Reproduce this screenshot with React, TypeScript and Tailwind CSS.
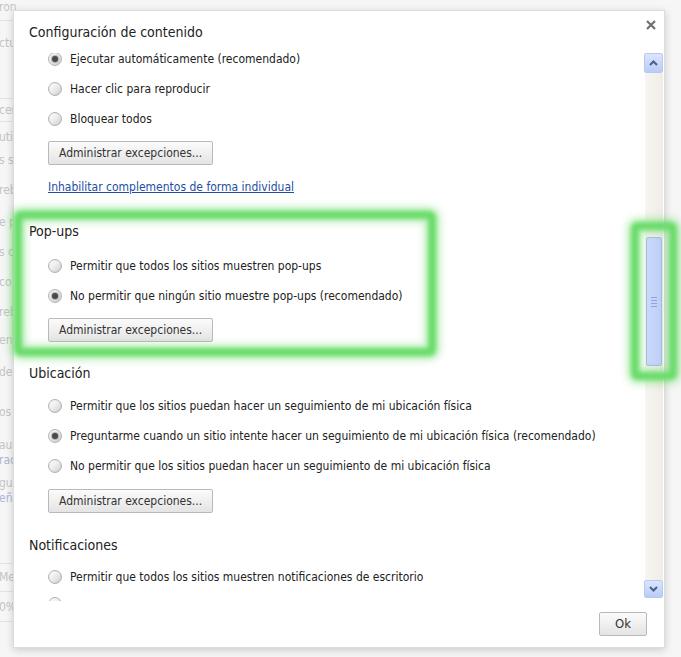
import React from 'react'

const font = { fontFamily: '"DejaVu Sans Condensed", Tahoma, "Liberation Sans", sans-serif' }

function Radio({ checked = false }: { checked?: boolean }) {
  return (
    <span className="flex items-center justify-center w-[14px] h-[14px] rounded-full border border-[#b4b4b4] bg-gradient-to-br from-white via-[#ececec] to-[#cfcfcf] shadow-[inset_0_0_1px_rgba(0,0,0,0.15)]">
      {checked && <span className="w-[6px] h-[6px] rounded-full bg-[#4a4a4a] shadow-[0_0_1px_1px_rgba(120,120,120,0.5)]" />}
    </span>
  )
}

function Option({ label, checked = false }: { label: string; checked?: boolean }) {
  return (
    <div className="flex items-center h-[30px] pl-[19px] gap-[8px] text-[12px] text-[#222]">
      <Radio checked={checked} />
      <span>{label}</span>
    </div>
  )
}

function Btn({ children, className = '' }: { children: React.ReactNode; className?: string }) {
  return (
    <div
      className={`flex items-center h-[24px] px-[10px] rounded-[2px] border border-[#b9b9b9] bg-gradient-to-b from-[#fbfbfb] to-[#e4e4e4] text-[12px] text-[#333] ${className}`}
    >
      {children}
    </div>
  )
}

function Heading({ children, className = '' }: { children: React.ReactNode; className?: string }) {
  return <div className={`h-[20px] flex items-center text-[14px] text-[#222] ${className}`}>{children}</div>
}

const bgLines: { y: number; t: string; blue?: boolean }[] = [
  { y: 0, t: 'ron' },
  { y: 36, t: 'ctu' },
  { y: 103, t: 'cer' },
  { y: 130, t: 'uti' },
  { y: 153, t: 's si' },
  { y: 183, t: 'reb' },
  { y: 215, t: 'e p' },
  { y: 245, t: 's c' },
  { y: 275, t: 'co' },
  { y: 305, t: 'reb' },
  { y: 333, t: 'en' },
  { y: 365, t: 'de' },
  { y: 405, t: 'os' },
  { y: 438, t: 'aut' },
  { y: 453, t: 'rac', blue: true },
  { y: 476, t: 'gu' },
  { y: 491, t: 'eñ', blue: true },
  { y: 570, t: 'Mec' },
  { y: 600, t: '0%' }
]

export default function App() {
  return (
    <div className="relative w-[681px] h-[657px] overflow-hidden bg-[#f6f6f6]" style={font}>
      {/* faded page behind the dialog */}
      <div className="absolute inset-0">
        <div className="absolute left-0 top-[20px] w-[40px] h-px bg-[#e2e2e2]" />
        <div className="absolute left-0 top-[98px] w-[40px] h-px bg-[#e2e2e2]" />
        <div className="absolute left-0 top-[121px] w-[40px] h-px bg-[#e2e2e2]" />
        <div className="absolute left-0 top-[563px] w-[40px] h-px bg-[#e2e2e2]" />
        <div className="absolute left-0 top-[591px] w-[40px] h-px bg-[#e2e2e2]" />
        <div className="absolute left-0 top-[621px] w-[40px] h-px bg-[#e2e2e2]" />
        {bgLines.map(l => (
          <div
            key={l.y}
            className={`absolute left-[-1px] text-[12px] leading-[14px] ${l.blue ? 'text-[#a9b6d8]' : 'text-[#c4c4c4]'}`}
            style={{ top: l.y }}
          >
            {l.t}
          </div>
        ))}
      </div>

      {/* dialog */}
      <div className="absolute left-[13px] top-[10px] w-[652px] h-[638px] bg-white border border-[#dcdcdc] shadow-[0_2px_8px_rgba(0,0,0,0.18)] flex flex-col">
        <div className="h-[42px] flex justify-between pl-[15px] pr-[8px] shrink-0">
          <div className="flex items-center text-[14px] text-[#222]">Configuración de contenido</div>
          <svg width="10" height="10" viewBox="0 0 10 10" className="mt-[9px]">
            <path d="M1 1 L9 9 M9 1 L1 9" stroke="#707070" strokeWidth="2.2" />
          </svg>
        </div>

        <div className="flex h-[548px] shrink-0">
          <div className="flex-1 overflow-hidden pl-[15px]">
            <div className="-mt-[9px]">
              <Option label="Ejecutar automáticamente (recomendado)" checked />
              <Option label="Hacer clic para reproducir" />
              <Option label="Bloquear todos" />
              <div className="pl-[19px] mt-[7px] flex">
                <Btn>Administrar excepciones...</Btn>
              </div>
              <div className="pl-[19px] mt-[14px] h-[16px] flex items-center text-[12px] text-[#1e4ea6] underline">
                Inhabilitar complementos de forma individual
              </div>

              <Heading className="mt-[26px]">Pop-ups</Heading>
              <div className="mt-[10px]">
                <Option label="Permitir que todos los sitios muestren pop-ups" />
                <Option label="No permitir que ningún sitio muestre pop-ups (recomendado)" checked />
              </div>
              <div className="pl-[19px] mt-[7px] flex">
                <Btn>Administrar excepciones...</Btn>
              </div>

              <Heading className="mt-[21px]">Ubicación</Heading>
              <div className="mt-[8px]">
                <Option label="Permitir que los sitios puedan hacer un seguimiento de mi ubicación física" />
                <Option label="Preguntarme cuando un sitio intente hacer un seguimiento de mi ubicación física (recomendado)" checked />
                <Option label="No permitir que los sitios puedan hacer un seguimiento de mi ubicación física" />
              </div>
              <div className="pl-[19px] mt-[8px] flex">
                <Btn>Administrar excepciones...</Btn>
              </div>

              <Heading className="mt-[22px]">Notificaciones</Heading>
              <div className="mt-[7px]">
                <Option label="Permitir que todos los sitios muestren notificaciones de escritorio" />
                <div className="pl-[19px] mt-[5px]">
                  <Radio />
                </div>
              </div>
            </div>
          </div>

          {/* scrollbar */}
          <div className="w-[19px] mr-px h-[545px] flex flex-col">
            <div className="h-[20px] flex items-center justify-center rounded-[2px] border border-[#b7c8f2] bg-gradient-to-b from-[#dbe5fd] to-[#b9cbf7]">
              <svg width="9" height="6" viewBox="0 0 9 6">
                <path d="M1 5 L4.5 1.5 L8 5" stroke="#4b5f86" strokeWidth="2" fill="none" />
              </svg>
            </div>
            <div className="flex-1 bg-gradient-to-r from-[#f7f6f1] to-[#efede6] border-l border-white flex flex-col">
              <div className="h-[164px]" />
              <div className="h-[129px] mx-px rounded-[2px] border border-[#a8bbeb] bg-gradient-to-r from-[#cdd9fc] to-[#bfcffa] flex flex-col items-center justify-center gap-[2px]">
                <div className="w-[6px] h-px bg-[#8ea4dc]" />
                <div className="w-[6px] h-px bg-[#8ea4dc]" />
                <div className="w-[6px] h-px bg-[#8ea4dc]" />
                <div className="w-[6px] h-px bg-[#8ea4dc]" />
              </div>
            </div>
            <div className="h-[18px] flex items-center justify-center rounded-[2px] border border-[#b7c8f2] bg-gradient-to-b from-[#dbe5fd] to-[#b9cbf7]">
              <svg width="9" height="6" viewBox="0 0 9 6">
                <path d="M1 1 L4.5 4.5 L8 1" stroke="#4b5f86" strokeWidth="2" fill="none" />
              </svg>
            </div>
          </div>
        </div>

        <div className="flex-1 flex items-center justify-end pr-[17px]">
          <Btn className="w-[48px] justify-center text-[13px]">Ok</Btn>
        </div>
      </div>

      {/* green highlights */}
      <div className="absolute left-[14px] top-[211px] w-[422px] h-[145px] rounded-[6px] border-[8px] border-[#6adc6a] blur-[2px] shadow-[0_0_7px_3px_rgba(110,220,110,0.6),inset_0_0_6px_3px_rgba(110,220,110,0.5)]" />
      <div className="absolute left-[631px] top-[222px] w-[46px] h-[158px] rounded-[6px] border-[8px] border-[#6adc6a] blur-[2px] shadow-[0_0_7px_3px_rgba(110,220,110,0.6),inset_0_0_6px_3px_rgba(110,220,110,0.5)]" />
    </div>
  )
}
